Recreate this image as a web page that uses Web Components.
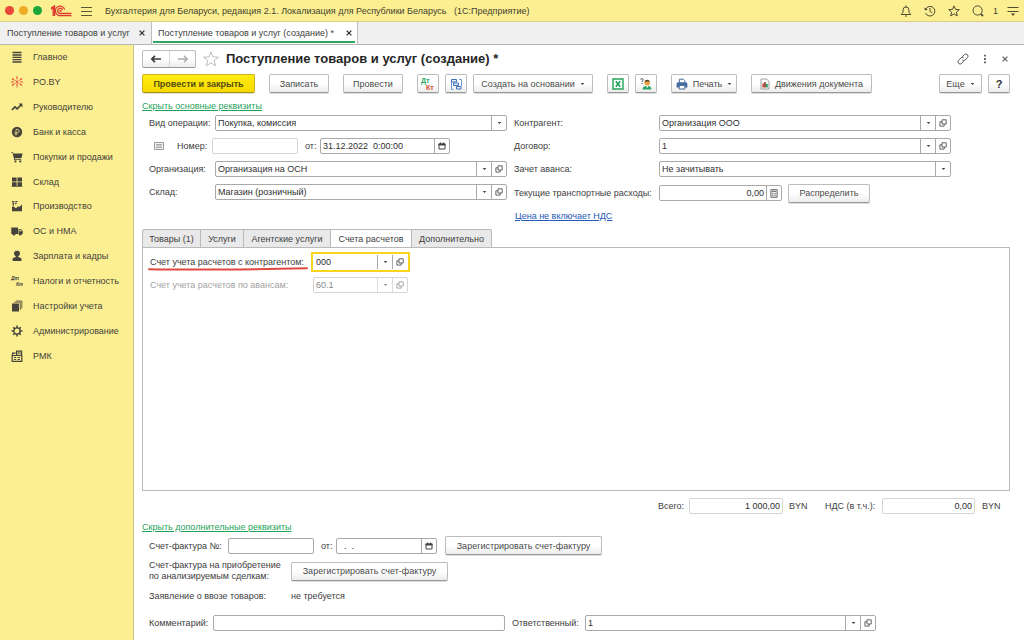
<!DOCTYPE html>
<html lang="ru">
<head>
<meta charset="utf-8">
<title>Поступление товаров и услуг (создание)</title>
<style>
  html { height: 100%; }
  body { margin: 0; min-height: 100%; font: 9px/14px "Liberation Sans", Arial, sans-serif; color: #404040; background: #fff; }
</style>
</head>
<body>
<app-shell>
  <app-header slot="header"></app-header>
  <window-tabs slot="tabs"></window-tabs>
  <side-nav slot="nav">
    <side-item icon="list">Главное</side-item>
    <side-item icon="spark">PO.BY</side-item>
    <side-item icon="trend">Руководителю</side-item>
    <side-item icon="coin">Банк и касса</side-item>
    <side-item icon="cart">Покупки и продажи</side-item>
    <side-item icon="boxes">Склад</side-item>
    <side-item icon="factory">Производство</side-item>
    <side-item icon="truck">ОС и НМА</side-item>
    <side-item icon="person">Зарплата и кадры</side-item>
    <side-item icon="dtkt">Налоги и отчетность</side-item>
    <side-item icon="books">Настройки учета</side-item>
    <side-item icon="gear">Администрирование</side-item>
    <side-item icon="till">РМК</side-item>
  </side-nav>
  <receipt-form></receipt-form>
</app-shell>

<script>
const ICONS = {
  logo: ['0 0 22 12', '<g fill="none" stroke="#dc3a2c" stroke-width="1.3"><path d="M1 4.2 3.2 2.6V11M1.2 2.8 4.6 1V11"/><path d="M14.6 4.6A4.7 4.7 0 1 0 11 10.5H21.5"/><path d="M12.6 4.8A2.6 2.6 0 1 0 11 8.4H21.5"/><circle cx="10.5" cy="6" r=".5"/></g>'],
  burger: ['0 0 11 10', '<path d="M0 1.5H11M0 5.5H11M0 9.5H11" stroke="#5d5836"/>'],
  bell: ['0 0 12 12', '<path d="M1.2 9.5H10.8L9 7.4V5A3 3 0 0 0 3 5V7.4ZM6 .4V2M5 11H7" fill="none" stroke="#504c35"/>'],
  history: ['0 0 12 12', '<path d="M1.6 4.4A4.8 4.8 0 1 1 1.6 8M6 3V6.4L8.2 7.6" fill="none" stroke="#504c35"/><path d="M.2 2.4 1 5.4 3.8 4.4Z" fill="#504c35"/>'],
  star: ['0 0 12 12', '<path d="M6 .9 7.5 4.4 11.3 4.7 8.4 7.2 9.3 10.9 6 8.9 2.7 10.9 3.6 7.2 .7 4.7 4.5 4.4Z" fill="none" stroke="#504c35"/>'],
  search: ['0 0 12 12', '<circle cx="5.6" cy="5.5" r="4.6" fill="none" stroke="#504c35"/><path d="M8.8 8.8 11 11" stroke="#504c35" stroke-width="1.8"/>'],
  menu: ['0 0 12 12', '<path d="M.5 2.5H11.5M.5 6.5H11.5" stroke="#504c35"/><path d="M3.8 8.6H8.2L6 11Z" fill="#504c35"/>'],
  close: ['0 0 8 8', '<path d="M1.6 1.6 6.4 6.4M6.4 1.6 1.6 6.4" stroke="currentColor" stroke-width="1.3"/>'],
  list: ['0 0 12 12', '<path d="M1.5 1.5H10.5M1.5 4H10.5M1.5 6.3H10.5M1.5 8.7H10.5M1.5 11H10.5" stroke="#45433a" stroke-width="1.3"/>'],
  spark: ['0 0 12 12', '<g stroke="#e5402e" stroke-width="1.1"><path d="M6 .5V4.4M6 7.6V11.5M1 2.5 4.4 5M1 9.5 4.4 7M11 2.5 7.6 5M11 9.5 7.6 7M0 6H2.6M9.4 6H12" stroke-dasharray="2.6 .6"/></g><circle cx="6" cy="6" r="1" fill="#e5402e"/>'],
  trend: ['0 0 12 12', '<path d="M.8 9 4 5.8 6.2 7.8 10 4" fill="none" stroke="#45433a" stroke-width="1.7"/><path d="M7.6 2.6H11.4V6.4Z" fill="#45433a"/>'],
  coin: ['0 0 12 12', '<circle cx="6" cy="6" r="5.2" fill="#45433a"/><path d="M5 9.4V3.4H6.6A1.6 1.6 0 0 1 6.6 6.6H3.6M3.6 8H6.6" fill="none" stroke="#d8cd82" stroke-width=".9"/>'],
  cart: ['0 0 12 12', '<path d="M.3 1.2H2L2.4 2.5H11.6L10.4 7.2H3.9L4.1 8.2H10.3V9H3.3L1.6 2H.3Z" fill="#45433a"/><circle cx="4.5" cy="10.4" r="1.1" fill="#45433a"/><circle cx="9.3" cy="10.4" r="1.1" fill="#45433a"/>'],
  boxes: ['0 0 12 12', '<path d="M1 1.5H5.6V5.5H1ZM6.4 1.5H11V5.5H6.4ZM1 6.3H5.6V10H1ZM6.4 6.3H11V10H6.4ZM.6 10.2H11.4V11H.6Z" fill="#45433a"/>'],
  factory: ['0 0 12 12', '<path d="M1 11.3V6.5H2.6L5 8.3 7.6 5.8V7.4L11 4.6V11.3Z" fill="#45433a"/><path d="M1.6 5.6V3H3V5.6ZM4.2 4.6V2.4H5.6V4ZM1 .9H3.4V2.4H1ZM4.4 .9H6.6V2H4.4Z" fill="#45433a"/>'],
  truck: ['0 0 12 12', '<path d="M.3 2.5H7V9H.3ZM7.5 4H10L11.8 6.2V9H7.5Z" fill="#45433a"/><circle cx="3" cy="9.3" r="1.3" fill="#45433a"/><circle cx="9.2" cy="9.3" r="1.3" fill="#45433a"/><path d="M8.4 4.8H9.7L10.7 6.2H8.4Z" fill="#fbef92"/>'],
  person: ['0 0 12 12', '<path d="M6 1A2.3 2.6 0 0 1 7.3 6L7.3 7 10.4 8.3V11H1.6V8.3L4.7 7V6A2.3 2.6 0 0 1 6 1Z" fill="#45433a"/>'],
  dtkt: ['0 0 12 12', '<g font-family="Liberation Sans" font-weight="bold" font-style="italic" font-size="5" fill="#45433a"><text x="0" y="5">Дт</text><text x="5" y="11">Кт</text></g>'],
  books: ['0 0 12 12', '<path d="M1 3.5H8V11.5H1Z" fill="#45433a"/><path d="M3 2.2H9.3V10M5 1H10.8V8.5" fill="none" stroke="#45433a" stroke-width=".8"/>'],
  gear: ['0 0 12 12', '<circle cx="6" cy="6" r="3.1" fill="none" stroke="#45433a" stroke-width="1.3"/><path d="M6 .6V3M6 9V11.4M.6 6H3M9 6H11.4M2.2 2.2 3.9 3.9M8.1 8.1 9.8 9.8M9.8 2.2 8.1 3.9M3.9 8.1 2.2 9.8" stroke="#45433a" stroke-width="1.5"/>'],
  till: ['0 0 12 12', '<path d="M1.2 5.5H10.8V11.3H1.2ZM5.6 5.4V1.2H10.6V5.4ZM1.6 5V3.2H4.6" fill="none" stroke="#45433a" stroke-width="1.2"/><path d="M6.5 3H9.8M3 7.5H5.2M3 9.5H5.2M6.6 7.5H9M6.6 9.5H9" stroke="#45433a"/>'],
  back: ['0 0 12 10', '<path d="M2 5H11M5 1.8 1.8 5 5 8.2" fill="none" stroke="#3a3a3a" stroke-width="1.7"/>'],
  fwd: ['0 0 12 10', '<path d="M1 5H10M7 1.8 10.2 5 7 8.2" fill="none" stroke="#a8a8a8" stroke-width="1.4"/>'],
  fav: ['0 0 16 16', '<path d="M8 .9 10 6 15.4 6.2 11.2 9.5 12.7 14.8 8 11.8 3.3 14.8 4.8 9.5 .6 6.2 6 6Z" fill="#fff" stroke="#b4b4b4" stroke-width=".9"/>'],
  link: ['0 0 12 12', '<g fill="none" stroke="#5c5c5c"><path d="M5 4.2 7.4 1.6A2 2 0 0 1 10.4 4.6L8.2 7A2 2 0 0 1 5.4 7"/><path d="M7 7.8 4.6 10.4A2 2 0 0 1 1.6 7.4L3.8 5A2 2 0 0 1 6.6 5"/></g>'],
  dots: ['0 0 4 10', '<path d="M1 .8H3V2.6H1ZM1 4.1H3V5.9H1ZM1 7.4H3V9.2H1Z" fill="#666"/>'],
  dtktColor: ['0 0 14 13', '<g font-family="Liberation Sans" font-weight="bold" font-size="7"><text x="0" y="6" fill="#27a55c">Дт</text><text x="5" y="13" fill="#dc4535">Кт</text></g>'],
  tree: ['0 0 12 12', '<g fill="none" stroke="#6b9ad0"><path d="M1.5 3V11.5H3.5M9 1.5H11.5V8"/></g><g fill="#e6eefa" stroke="#3c70b8"><path d="M1.5 1.5H6.5V4H1.5ZM3.5 5H8.5V7.5H3.5ZM6.5 8.5H11V11H6.5Z"/></g>'],
  excel: ['0 0 12 12', '<path d="M1 1H11V11H1Z" fill="#fff" stroke="#24a359" stroke-width="1.4"/><path d="M3.8 3.2 8.2 8.8M8.2 3.2 3.8 8.8" stroke="#24a359" stroke-width="1.7"/>'],
  consult: ['0 0 12 12', '<path d="M2.6 11.5C2.6 8.6 4.4 8 7 8S11.4 8.6 11.4 11.5Z" fill="#27a567"/><path d="M6 8H8.4L7.2 10Z" fill="#fff"/><circle cx="7.2" cy="4.8" r="2.8" fill="#e9a345"/><path d="M4.4 4A2.9 2.9 0 0 1 10 4L8 3.2Z" fill="#51412c"/><path d="M.8 1.6C.8 .2 3.2.2 3 1.8 2.9 2.7 2 2.7 2 4M2 5V6" fill="none" stroke="#444"/>'],
  printer: ['0 0 12 12', '<path d="M3.4 4.6V1.2H7.4L8.8 2.6V4.6" fill="#fff" stroke="#4c6c95"/><path d="M.6 6Q.6 4.2 2 4.2H10Q11.4 4.2 11.4 6V9.4H.6Z" fill="#426ba3"/><path d="M3.2 7.4H8.8V11H3.2Z" fill="#fff" stroke="#4c6c95"/>'],
  report: ['0 0 10 12', '<path d="M1 1H6.6L9 3.4V11H1Z" fill="#fff" stroke="#9d9d9d"/><path d="M2.4 5.4H4.2V9.5H2.4Z" fill="#d6402f"/><path d="M4.2 4H5.8V9.5H4.2Z" fill="#7b3d33"/><path d="M6 6H7.8V9.5H6Z" fill="#2b9f57"/>'],
  caret: ['0 0 6 4', '<path d="M.8 .8H5.2L3 3.2Z" fill="#444"/>'],
  open: ['0 0 8 8', '<path d="M3 .8H7.2V5H3ZM3 2.8H.9V7.1H5.2V5" fill="none" stroke="#555" stroke-width=".9"/>'],
  cal: ['0 0 8 8', '<path d="M1 2H7V7H1Z" fill="#fff" stroke="#444"/><path d="M.5 1.4H7.5V3.4H.5ZM2 .4H3V2H2ZM5 .4H6V2H5Z" fill="#444"/>'],
  calc: ['0 0 8 9', '<path d="M.9 .7H7.1V8.3H.9Z" fill="#eee" stroke="#666"/><path d="M2 2.4H6" stroke="#666"/><path d="M2 4.6H6M2 6.4H6" stroke="#777" stroke-dasharray="1 .6"/>'],
  note: ['0 0 10 8', '<path d="M.5 .5H9.5V7.5H.5Z" fill="#f4f4f4" stroke="#999"/><path d="M2 2.5H8M2 4H8M2 5.5H8" stroke="#888" stroke-width=".7"/>']
};

function define(name, html) {
  const tpl = document.createElement('template');
  customElements.define(name, class extends HTMLElement {
    connectedCallback() {
      if (this.shadowRoot) return;
      const root = this.attachShadow({ mode: 'open' });
      tpl.innerHTML = typeof html === 'function' ? html(this) : html;
      root.append(tpl.content.cloneNode(true));
    }
  });
}
const attr = (el, name, fallback = '') => el.getAttribute(name) ?? fallback;

/* <ui-icon name width height> */
define('ui-icon', el => {
  const [box, body] = ICONS[attr(el, 'name')];
  const [, , w, h] = box.split(' ');
  return `<style>:host{display:inline-flex;flex:none}svg{display:block}</style>
    <svg viewBox="${box}" width="${attr(el, 'width', w)}" height="${attr(el, 'height', h)}" aria-hidden="true">${body}</svg>`;
});

define('app-shell', `<style>
  :host { display: flex; flex-direction: column; min-height: 100vh; }
  .body { display: flex; flex: 1; }
  .main { display: flex; flex: 1; min-width: 0; }
  .main ::slotted(*) { flex: 1; min-width: 0; }
</style>
<slot name="header"></slot><slot name="tabs"></slot>
<div class="body"><slot name="nav"></slot><main class="main"><slot></slot></main></div>`);

define('app-header', `<style>
  :host { display: flex; align-items: center; box-sizing: border-box; height: 22px; padding: 0 5px; background: #fbef92; border-bottom: 1px solid #d9cf8a; color: #45422f; }
  .lights { display: flex; gap: 5px; margin-right: 8px; }
  .lights i { width: 9px; height: 9px; border-radius: 50%; }
  button { display: flex; padding: 0; border: 0; background: none; font: inherit; color: inherit; }
  .burger { margin: 0 13px 0 9px; }
  h1 { flex: 1; margin: 0; font: inherit; white-space: pre; overflow: hidden; }
  .tools { display: flex; align-items: center; gap: 12px; }
  .tools .count { margin: 0 -3px; line-height: 12px; }
</style>
<div class="lights"><i style="background:#e8473a"></i><i style="background:#efab24"></i><i style="background:#1ca53b"></i></div>
<ui-icon name="logo"></ui-icon>
<button class="burger" aria-label="Меню"><ui-icon name="burger"></ui-icon></button>
<h1>Бухгалтерия для Беларуси, редакция 2.1. Локализация для Республики Беларусь   (1С:Предприятие)</h1>
<div class="tools">
  <button aria-label="Уведомления"><ui-icon name="bell"></ui-icon></button>
  <button aria-label="История"><ui-icon name="history"></ui-icon></button>
  <button aria-label="Избранное"><ui-icon name="star"></ui-icon></button>
  <button aria-label="Поиск"><ui-icon name="search"></ui-icon></button>
  <span class="count">1</span>
  <button aria-label="Сервис"><ui-icon name="menu"></ui-icon></button>
</div>`);

define('window-tabs', `<style>
  :host { display: flex; box-sizing: border-box; height: 23px; background: #f0f0f0; border-bottom: 1px solid #b5b5b5; }
  .tab { display: flex; align-items: center; justify-content: space-between; box-sizing: border-box; width: 152px; padding: 0 5px 0 7px; border-right: 1px solid #bdbdbd; }
  .tab.on { width: 206px; padding: 0 2px 0 1px; background: #fff; }
  .on .in { display: flex; flex: 1; align-items: center; justify-content: space-between; align-self: stretch; padding: 2px 2px 0 5px; border-bottom: 2px solid #2fa765; margin-bottom: 1px; }
  button { display: flex; padding: 0; border: 0; background: none; color: #333; }
  a { color: inherit; text-decoration: none; white-space: nowrap; }
</style>
<div class="tab"><a href="#list">Поступление товаров и услуг</a><button aria-label="Закрыть"><ui-icon name="close"></ui-icon></button></div>
<div class="tab on"><div class="in"><a href="#new">Поступление товаров и услуг (создание) *</a><button aria-label="Закрыть"><ui-icon name="close"></ui-icon></button></div></div>`);

define('side-nav', `<style>
  :host { display: block; box-sizing: border-box; flex: none; width: 134px; background: #fbef92; border-right: 1px solid #cfc68c; }
  nav { display: grid; grid-auto-rows: 1fr; height: 323px; }
</style><nav><slot></slot></nav>`);

define('side-item', el => `<style>
  :host { display: grid; min-height: 0; }
  a { display: flex; align-items: center; gap: 10px; padding-left: 11px; color: #45433a; text-decoration: none; white-space: nowrap; }
</style><a href="#${attr(el, 'icon')}"><ui-icon name="${attr(el, 'icon')}"></ui-icon><slot></slot></a>`);

/* <push-button icon caret primary label>: text goes to the slot */
define('push-button', el => `<style>
  :host { display: inline-flex; flex: none; }
  button { display: flex; flex: 1; align-items: center; justify-content: center; gap: 5px; box-sizing: border-box; height: 19px; padding: 0 2px; font: inherit; line-height: 14px; color: #4a4a4a; white-space: nowrap; border: 1px solid #bcbcbc; border-bottom-color: #999; border-radius: 2px; background: linear-gradient(#fff 50%, #ececec); box-shadow: 0 1px 0 #dedede; }
  :host([primary]) button { font-weight: bold; color: #554c10; background: linear-gradient(#ffec10, #f7da00); border-color: #cdb420; border-bottom-color: #a8921a; }
  :host([strong]) button { font-weight: bold; font-size: 11px; color: #333; }
</style>
<button type="button"${el.hasAttribute('label') ? ` aria-label="${attr(el, 'label')}"` : ''}>${el.hasAttribute('icon') ? `<ui-icon name="${attr(el, 'icon')}"></ui-icon>` : ''}${el.textContent ? '<slot></slot>' : ''}${el.hasAttribute('caret') ? '<ui-icon name="caret" width="5"></ui-icon>' : ''}</button>`);

/* <form-field label value kind="text|select" extra="open cal calc">
   --label and --box set the widths of the label and of the box */
define('form-field', el => {
  const v = attr(el, 'value'), off = el.hasAttribute('disabled') ? ' disabled' : '';
  const ro = el.hasAttribute('readonly') ? ' readonly' : '';
  const extra = attr(el, 'extra');
  const titles = { open: 'Открыть', cal: 'Календарь', calc: 'Калькулятор' };
  const control = attr(el, 'kind') === 'select'
    ? `<span class="sel"><select id="c"${off}><option>${v}</option></select><span class="arrow"><ui-icon name="caret" width="5"></ui-icon></span></span>`
    : `<input id="c" type="text" value="${v}"${off}${ro}>`;
  return `<style>
  :host { display: flex; align-items: center; min-width: 0; }
  label { flex: none; position: relative; width: var(--label, auto); white-space: nowrap; }
  .box { display: flex; flex: 1 1 auto; box-sizing: border-box; width: var(--box, 0); min-width: 0; height: 16px; border: 1px solid #a9a9a9; border-radius: 2px; background: #fff; }
  :host([fixed]) .box { flex: none; }
  .sel { display: grid; flex: 1; min-width: 0; grid-template-columns: minmax(0, 1fr) 15px; }
  input, select { appearance: none; box-sizing: border-box; width: 100%; min-width: 0; height: 14px; margin: 0; padding: 0 2px; border: 0; outline: 0; border-radius: 0; background: none; font: inherit; line-height: 14px; color: #2f2f2f; opacity: 1; }
  .sel select { grid-area: 1 / 1 / 2 / 3; }
  .arrow { grid-area: 1 / 2; pointer-events: none; }
  .arrow, button { display: flex; flex: none; align-items: center; justify-content: center; box-sizing: border-box; width: 15px; padding: 0; border: 0; border-left: 1px solid #a9a9a9; background: none; }
  :host([num]) input { text-align: right; }
  :host([light]) .box { border-color: #d5d5d5; }
  :host([disabled]) { color: #a3a3a3; }
  :host([disabled]) .box { border-color: #d5d5d5; }
  :host([disabled]) :is(input, select) { color: #8a8a8a; }
  :host([disabled]) :is(.arrow, button) { border-color: #dcdcdc; }
  :host([disabled]) ui-icon { opacity: .55; }
  :host([active]) .box { border-color: #fff; border-radius: 0; outline: 2px solid #fad51e; }
  .mark { position: absolute; left: -2px; top: 11px; width: 160px; height: 5px; }
</style>
<label for="c">${attr(el, 'label')}${el.hasAttribute('marked') ? '<svg class="mark" viewBox="0 0 160 5" preserveAspectRatio="none" aria-hidden="true"><path d="M1 3.2Q60 4.4 159 2.2" fill="none" stroke="#df4a40" stroke-width="2" stroke-linecap="round"/></svg>' : ''}</label>
<span class="box">${control}${extra ? `<button type="button" aria-label="${titles[extra]}"${off}><ui-icon name="${extra}"></ui-icon></button>` : ''}</span>`;
});

define('page-tabs', `<style>
  :host { display: flex; flex-direction: column; }
  .strip { display: flex; }
  button { box-sizing: border-box; height: 19px; margin: 0 0 -1px; padding: 0 5px; font: inherit; color: #404040; white-space: nowrap; background: #e9e9e9; border: 1px solid #b9b9b9; border-left-width: 0; }
  button:first-child { border-left-width: 1px; border-top-left-radius: 2px; }
  button:last-child { border-top-right-radius: 2px; }
  button[aria-selected=true] { background: #fff; border-bottom-color: #fff; }
  .panel { flex: 1; display: flex; flex-direction: column; gap: 7px; padding: 6px 7px; border: 1px solid #b9b9b9; }
</style>
<div class="strip" role="tablist">
  <button role="tab" style="width:59px">Товары (1)</button>
  <button role="tab" style="width:43px">Услуги</button>
  <button role="tab" style="width:87px">Агентские услуги</button>
  <button role="tab" style="width:81px" aria-selected="true">Счета расчетов</button>
  <button role="tab" style="width:80px">Дополнительно</button>
</div>
<div class="panel" role="tabpanel"><slot></slot></div>`);

define('receipt-form', `<style>
  :host { display: flex; flex-direction: column; padding: 5px 14px 9px 8px; }
  .row { display: flex; align-items: center; }
  .nav { height: 18px; }
  .pair { display: flex; box-sizing: border-box; height: 18px; border: 1px solid #bcbcbc; border-bottom-color: #999; border-radius: 2px; background: linear-gradient(#fff 50%, #ececec); }
  .pair button { display: flex; align-items: center; justify-content: center; width: 26px; padding: 0; border: 0; background: none; }
  .pair button + button { border-left: 1px solid #d8d8d8; }
  .plain { display: flex; padding: 0; border: 0; background: none; color: #666; }
  h2 { flex: 1; margin: 0 0 0 7px; font-size: 13px; line-height: 18px; font-weight: bold; color: #262626; white-space: nowrap; }
  .win { display: flex; align-items: center; gap: 14px; padding-right: 1px; }
  .bar { margin: 6px 0; }
  .grow { flex: 1; }
  .sec { align-self: flex-start; color: #1fa35b; }
  .price { align-self: flex-start; margin-left: 1px; color: #2458b3; }
  .cols { display: grid; grid-template-columns: minmax(0, 358fr) minmax(0, 437fr); gap: 7px; margin: 2px 59px 6px 7px; align-items: start; }
  .col { display: flex; flex-direction: column; gap: 7px; min-width: 0; }
  .l { --label: 66px; }
  .r { --label: 145px; }
  .r .row { height: 18px; }
  .auto { --label: auto; }
  .num { padding-left: 5px; }
  page-tabs { flex: 1; }
  page-tabs form-field { --label: 163px; --box: 95px; }
  .totals { justify-content: flex-end; margin: 7px 9px 6px 0; }
  .in { margin-left: 7px; }
  .lines { line-height: 11px; }
</style>
<div class="row nav">
  <div class="pair"><button aria-label="Назад"><ui-icon name="back"></ui-icon></button><button aria-label="Вперед"><ui-icon name="fwd"></ui-icon></button></div>
  <button class="plain" style="margin-left:7px" aria-label="В избранное"><ui-icon name="fav"></ui-icon></button>
  <h2>Поступление товаров и услуг (создание) *</h2>
  <div class="win">
    <button class="plain" aria-label="Ссылка"><ui-icon name="link"></ui-icon></button>
    <button class="plain" aria-label="Еще"><ui-icon name="dots"></ui-icon></button>
    <button class="plain" aria-label="Закрыть"><ui-icon name="close"></ui-icon></button>
  </div>
</div>
<div class="row bar">
  <push-button primary style="width:113px">Провести и закрыть</push-button>
  <push-button style="width:60px;margin-left:14px">Записать</push-button>
  <push-button style="width:60px;margin-left:14px">Провести</push-button>
  <push-button icon="dtktColor" label="Дт Кт" style="width:22px;margin-left:14px"></push-button>
  <push-button icon="tree" label="Структура подчиненности" style="width:22px;margin-left:6px"></push-button>
  <push-button caret style="width:120px;margin-left:6px">Создать на основании</push-button>
  <push-button icon="excel" label="Загрузить из Excel" style="width:22px;margin-left:14px"></push-button>
  <push-button icon="consult" label="Консультация" style="width:22px;margin-left:6px"></push-button>
  <push-button icon="printer" caret style="width:66px;margin-left:14px">Печать</push-button>
  <push-button icon="report" style="width:121px;margin-left:14px">Движения документа</push-button>
  <span class="grow"></span>
  <push-button caret style="width:43px">Еще</push-button>
  <push-button strong style="width:22px;margin-left:6px">?</push-button>
</div>
<a class="sec" href="#main">Скрыть основные реквизиты</a>
<div class="cols">
  <div class="col l">
    <form-field label="Вид операции:" kind="select" value="Покупка, комиссия"></form-field>
    <div class="row num auto">
      <ui-icon name="note"></ui-icon>
      <form-field fixed light label="Номер:" style="--label:35px;--box:86px;margin-left:13px"></form-field>
      <form-field fixed label="от:" value="31.12.2022  0:00:00" extra="cal" style="--label:15px;--box:130px;margin-left:7px"></form-field>
    </div>
    <form-field label="Организация:" kind="select" extra="open" value="Организация на ОСН"></form-field>
    <form-field label="Склад:" kind="select" extra="open" value="Магазин (розничный)"></form-field>
  </div>
  <div class="col r">
    <form-field label="Контрагент:" kind="select" extra="open" value="Организация ООО"></form-field>
    <form-field label="Договор:" kind="select" extra="open" value="1"></form-field>
    <form-field label="Зачет аванса:" kind="select" value="Не зачитывать"></form-field>
    <div class="row">
      <form-field fixed num label="Текущие транспортные расходы:" value="0,00" extra="calc" style="--box:123px"></form-field>
      <push-button style="width:82px;margin-left:6px">Распределить</push-button>
    </div>
    <a class="price" href="#price">Цена не включает НДС</a>
  </div>
</div>
<page-tabs>
  <form-field fixed active marked label="Счет учета расчетов с контрагентом:" kind="select" extra="open" value="000"></form-field>
  <form-field fixed disabled label="Счет учета расчетов по авансам:" kind="select" extra="open" value="60.1"></form-field>
</page-tabs>
<div class="row totals">
  <form-field fixed light num readonly label="Всего:" value="1 000,00" style="--label:31px;--box:94px"></form-field>
  <span style="width:36px;margin-left:6px">BYN</span>
  <form-field fixed light num readonly label="НДС (в т.ч.):" value="0,00" style="--label:57px;--box:93px"></form-field>
  <span style="width:19px;margin-left:7px">BYN</span>
</div>
<a class="sec" href="#more">Скрыть дополнительные реквизиты</a>
<div class="row in" style="margin-top:2px">
  <form-field fixed label="Счет-фактура №:" style="--label:79px;--box:86px"></form-field>
  <form-field fixed label="от:" value="  .  ." extra="cal" style="--label:15px;--box:101px;margin-left:7px"></form-field>
  <push-button style="width:157px;margin-left:8px">Зарегистрировать счет-фактуру</push-button>
</div>
<div class="row in" style="margin-top:5px">
  <span class="lines" style="width:142px">Счет-фактура на приобретение<br>по анализируемым сделкам:</span>
  <push-button style="width:157px">Зарегистрировать счет-фактуру</push-button>
</div>
<div class="row in" style="margin-top:7px"><span style="width:142px">Заявление о ввозе товаров:</span><span>не требуется</span></div>
<div class="cols" style="grid-template-columns:minmax(0,356fr) minmax(0,364fr);margin:12px 134px 0 7px">
  <form-field label="Комментарий:" style="--label:64px"></form-field>
  <form-field label="Ответственный:" kind="select" extra="open" value="1" style="--label:73px"></form-field>
</div>`);
</script>
</body>
</html>
